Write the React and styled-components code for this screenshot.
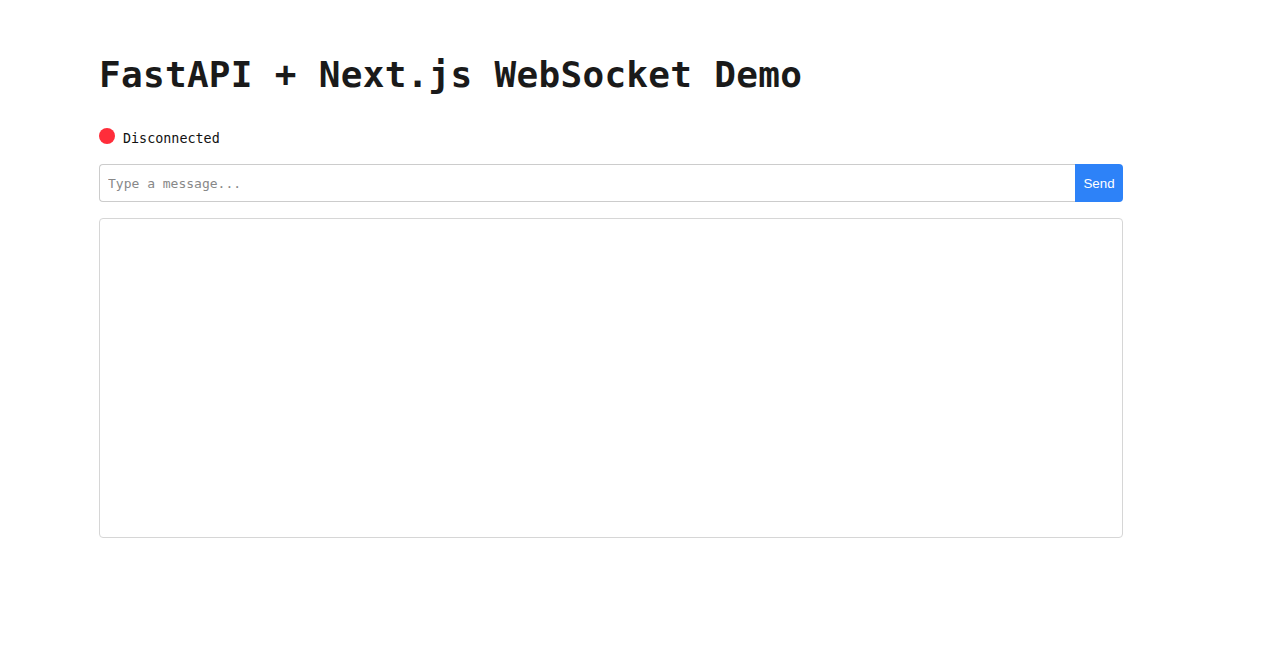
import styled, { createGlobalStyle } from "styled-components";

const GlobalStyle = createGlobalStyle`
  body {
    margin: 0;
    background: #fff;
    font-family: "DejaVu Sans Mono", "Liberation Mono", monospace;
    color: #111;
  }
`;

const Page = styled.main`
  width: 1024px;
  padding: 53px 0 0 99px;
`;

const Title = styled.h1`
  margin: 0 0 33px;
  font-size: 36px;
  line-height: 44px;
  font-weight: 700;
  color: #1a1a1a;
  letter-spacing: 0.3px;
`;

const Status = styled.div`
  display: flex;
  align-items: center;
  gap: 8px;
  font-size: 13.4px;
  margin-bottom: 18px;
`;

const Dot = styled.span`
  width: 16px;
  height: 16px;
  border-radius: 50%;
  background: ${(p) => (p.$on ? "#22c55e" : "#ff2d3a")};
  transform: translateY(-2px);
`;

const Form = styled.form`
  display: flex;
  margin-bottom: 16px;
`;

const Input = styled.input`
  flex: 1;
  height: 38px;
  box-sizing: border-box;
  padding: 0 8px;
  border: 1px solid #ccc;
  border-right: none;
  border-radius: 4px 0 0 4px;
  font-family: "DejaVu Sans Mono", monospace;
  font-size: 13px;
  outline: none;
  &::placeholder {
    color: #888;
  }
`;

const Send = styled.button`
  width: 48px;
  height: 38px;
  border: none;
  border-radius: 0 4px 4px 0;
  background: #2d82f8;
  color: #fff;
  font-family: "Liberation Sans", Arial, sans-serif;
  font-size: 13.33px;
  padding: 0;
`;

const Messages = styled.div`
  height: 320px;
  box-sizing: border-box;
  border: 1px solid #d6d6d6;
  border-radius: 4px;
`;

export default function App() {
  return (
    <>
      <GlobalStyle />
      <Page>
        <Title>FastAPI + Next.js WebSocket Demo</Title>
        <Status>
          <Dot />
          <span>Disconnected</span>
        </Status>
        <Form onSubmit={(e) => e.preventDefault()}>
          <Input placeholder="Type a message..." />
          <Send type="submit">Send</Send>
        </Form>
        <Messages />
      </Page>
    </>
  );
}
